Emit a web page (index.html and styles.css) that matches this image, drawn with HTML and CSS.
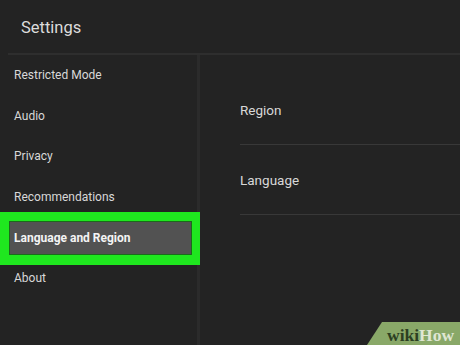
FILE: index.html
```html
<!DOCTYPE html>
<html>
<head>
<meta charset="utf-8">
<link rel="stylesheet" href="styles.css">
</head>
<body>
<div class="app">
  <header class="header"><span class="title">Settings</span></header>
  <div class="main">
    <nav class="sidebar">
      <div class="item">Restricted Mode</div>
      <div class="item">Audio</div>
      <div class="item">Privacy</div>
      <div class="item">Recommendations</div>
      <div class="item selected"><div class="inner">Language and Region</div></div>
      <div class="item">About</div>
    </nav>
    <section class="content">
      <div class="row">Region</div>
      <div class="row">Language</div>
    </section>
  </div>
  <div class="wikihow"><span class="wiki">wiki</span><span class="how">How</span></div>
</div>
</body>
</html>
```
FILE: styles.css
```css
html, body {
  margin: 0;
  padding: 0;
  background: #232323;
}
body {
  font-family: Roboto, "Liberation Sans", sans-serif;
  color: #d8d8d8;
  width: 460px;
  height: 345px;
  overflow: hidden;
}
.app {
  position: relative;
  width: 460px;
  height: 345px;
  display: flex;
  flex-direction: column;
}
.header {
  height: 53px;
  margin-left: 8px;
  border-bottom: 2px solid #2e2e2e;
  display: flex;
  align-items: center;
  padding-left: 13px;
  box-sizing: content-box;
}
.title {
  font-size: 16.5px;
  color: #dcdcdc;
  margin-top: 1px;
}
.main {
  flex: 1;
  display: flex;
}
.sidebar {
  width: 197px;
  border-right: 3px solid #2b2b2b;
  display: flex;
  flex-direction: column;
}
.item {
  height: 40.6px;
  display: flex;
  align-items: center;
  padding-left: 14px;
  font-size: 12px;
  color: #d8d8d8;
}
.item.selected {
  height: 53px;
  margin: -5.4px -3px -7px 0;
  padding: 9px 8px 10px 9px;
  box-sizing: border-box;
  background: #1fe71f;
  position: relative;
}
.inner {
  flex: 1;
  height: 100%;
  box-sizing: border-box;
  background: #525252;
  border: 1px solid #1b6b1b;
  display: flex;
  align-items: center;
  padding-left: 4px;
  font-weight: bold;
  color: #f4f4f4;
}
.content {
  flex: 1;
  padding-left: 40px;
  padding-top: 20px;
}
.row {
  height: 69px;
  border-bottom: 1px solid #383838;
  display: flex;
  align-items: center;
  font-size: 13.5px;
  color: #d8d8d8;
}
.wikihow {
  position: absolute;
  right: 0;
  bottom: 0;
  width: 93px;
  height: 23px;
  background: #89a868;
  clip-path: polygon(15px 0, 100% 0, 100% 100%, 0 100%);
  font-family: "Liberation Serif", serif;
  font-weight: bold;
  font-size: 17.5px;
  display: flex;
  align-items: center;
  padding-left: 20px;
  padding-top: 3px;
  box-sizing: border-box;
}
.wiki { color: #2c3f22; }
.how { color: #dfe6d3; }
```
